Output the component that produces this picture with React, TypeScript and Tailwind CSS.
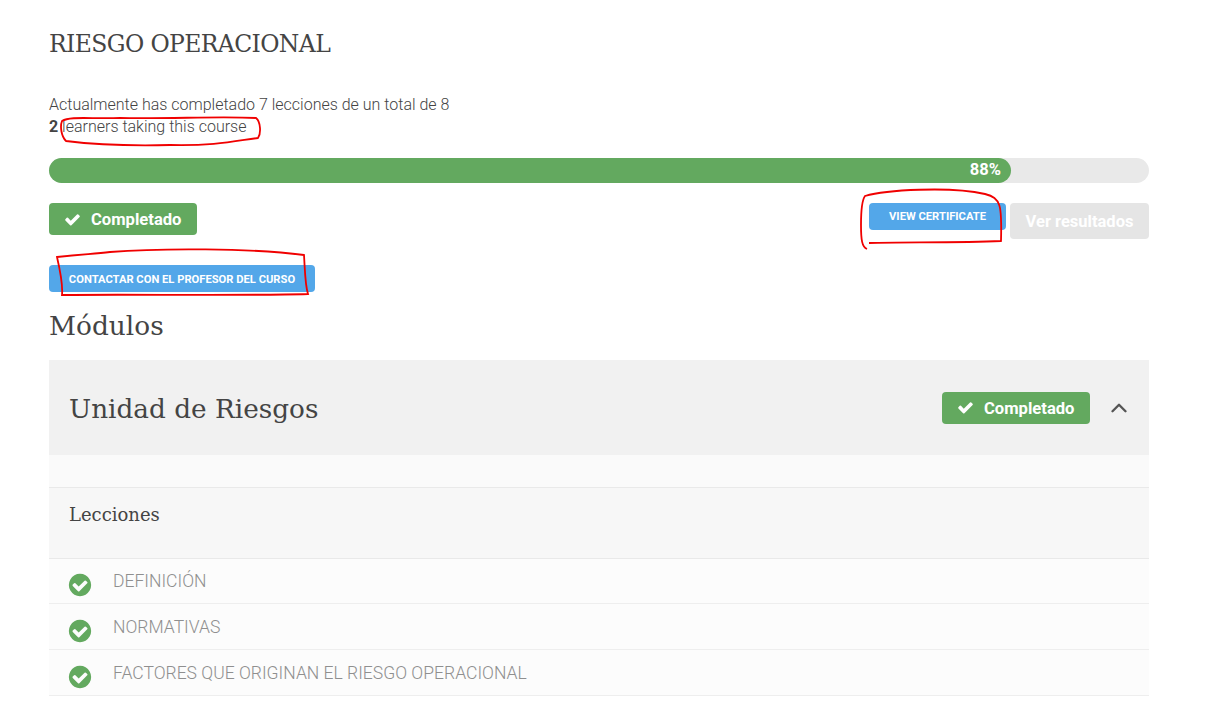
import { ChevronUp } from "lucide-react";

const slab = "font-['DejaVu_Serif',serif]";
const lessons = ["DEFINICIÓN", "NORMATIVAS", "FACTORES QUE ORIGINAN EL RIESGO OPERACIONAL"];

function Check() {
  return (
    <svg viewBox="0 0 1792 1792" className="w-[17px] h-[17px] mr-[10px] fill-white">
      <path d="M1671 566q0 40-28 68l-724 724-136 136q-28 28-68 28t-68-28l-136-136-362-362q-28-28-28-68t28-68l136-136q28-28 68-28t68 28l294 295 656-657q28-28 68-28t68 28l136 136q28 28 28 68z" />
    </svg>
  );
}

function CheckCircle() {
  return (
    <svg viewBox="0 0 1792 1792" className="w-[26px] h-[26px] -ml-[2px] mt-[13px] fill-[#63a95f]">
      <path d="M1412 734q0-28-18-46l-91-90q-19-19-45-19t-45 19l-408 407-226-226q-19-19-45-19t-45 19l-91 90q-18 18-18 46 0 27 18 45l362 362q19 19 45 19 27 0 46-19l543-543q18-18 18-45zm252 162q0 209-103 385.5t-279.5 279.5-385.5 103-385.5-103-279.5-279.5-103-385.5 103-385.5 279.5-279.5 385.5-103 385.5 103 279.5 279.5 103 385.5z" />
    </svg>
  );
}

function Done() {
  return (
    <div className="flex items-center h-[32px] w-[148px] pl-[15px] rounded-[4px] bg-[#63a95f] text-white text-[16.6px] font-bold">
      <Check />
      <span className="pt-[3px]">Completado</span>
    </div>
  );
}

export default function App() {
  return (
    <div className="relative h-[708px] w-[1208px] overflow-hidden bg-white font-['Roboto',sans-serif] text-[#4c4c4c]">
      <div className="w-[1100px] ml-[49px] flex flex-col">
        <h1 className={`${slab} text-[23.5px] tracking-[-0.62px] leading-[30px] mt-[29px] -mb-[1px] text-[#444]`}>RIESGO OPERACIONAL</h1>
        <p className="mt-[36px] text-[16px] leading-[22px] font-light text-[#444]">
          Actualmente has completado 7 lecciones de un total de 8
          <br />
          <b className="font-bold">2</b> learners taking this course
        </p>
        <div className="mt-[20px] h-[25px] rounded-full bg-[#e9e9e9]">
          <div className="h-full w-[962px] rounded-full bg-[#63a95f] flex items-center justify-end pr-[10px] text-white font-bold text-[16.5px]">
            88%
          </div>
        </div>
        <div className="mt-[20px] flex items-start">
          <Done />
          <div className="ml-auto h-[27px] w-[137px] rounded-[4px] bg-[#53a7e9] text-white text-[11.2px] font-bold flex items-center justify-center pt-[1px]">
            VIEW CERTIFICATE
          </div>
          <div className="ml-[4px] h-[36px] w-[139px] rounded-[4px] bg-[#e5e5e5] text-white text-[16.5px] font-bold flex items-center justify-center pt-[3px]">
            Ver resultados
          </div>
        </div>
        <div className="-mt-[3px]">
          <div className="mt-[29px] h-[27px] w-[266px] rounded-[4px] bg-[#53a7e9] text-white text-[11.2px] font-bold flex items-center justify-center pt-[3px]">
            CONTACTAR CON EL PROFESOR DEL CURSO
          </div>
        </div>
        <h2 className={`${slab} text-[26.4px] leading-[34px] mt-[17px] text-[#444]`}>Módulos</h2>
        <div className="mt-[17px] h-[95px] bg-[#f1f1f1] flex items-center pl-[20px]">
          <span className={`${slab} text-[26.3px] pt-[4px] text-[#444]`}>Unidad de Riesgos</span>
          <div className="ml-auto">
            <Done />
          </div>
          <ChevronUp className="w-[26px] h-[26px] ml-[16px] mr-[17px] text-[#555]" strokeWidth={2.2} />
        </div>
        <div className="h-[32px] bg-[#fafafa]" />
        <div className="h-[72px] bg-[#f7f7f7] border-y border-[#e9e9e9] pl-[20px] pt-[13px]">
          <span className={`${slab} text-[18px] text-[#444]`}>Lecciones</span>
        </div>
        {lessons.map((t, i) => (
          <div key={t} className={`${i === 0 ? "h-[45px]" : "h-[46px] pt-[1px]"} shrink-0 bg-[#fcfcfc] border-b border-[#eeeeee] flex pl-[20px]`}>
            <CheckCircle />
            <span className="ml-[20px] mt-[10px] text-[17.55px] leading-[24px] font-light text-[#8f8f8f]">{t}</span>
          </div>
        ))}
      </div>
      <svg className="absolute inset-0 pointer-events-none" width="1208" height="708" fill="none" stroke="#f00000" strokeWidth="1.8">
        <path d="M62 121 C70 116 90 119 120 118 C170 119 220 116 256 118 C261 122 261 134 258 138 C235 141 215 146 170 145 C130 146 90 144 66 141 C61 136 60 126 62 121 Z" />
        <path d="M867 249 C862 247 861 240 861 225 C861 212 862 200 865 196 C885 190 950 186 985 194 C1001 198 1002 205 1001 241 C960 243 905 242 869 243" />
        <path d="M57 257 C85 254 95 254 110 252 C160 248 250 248 304 255 C305 270 305 285 308 294 C240 296 130 294 62 295 C63 285 60 270 57 257 Z" />
      </svg>
    </div>
  );
}
